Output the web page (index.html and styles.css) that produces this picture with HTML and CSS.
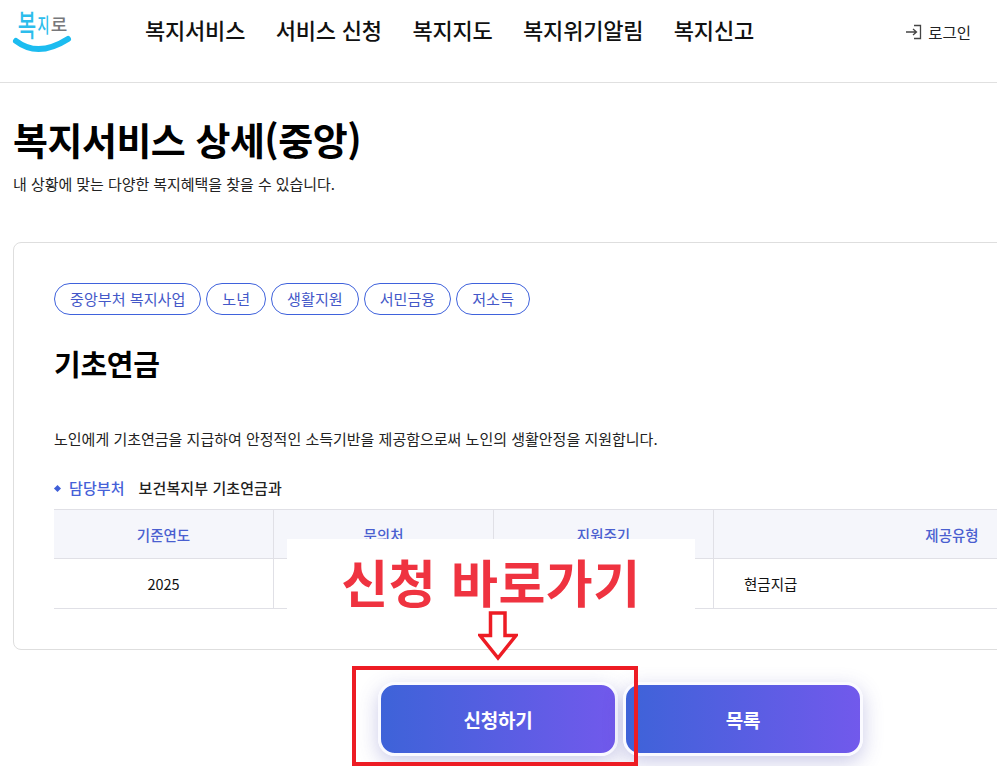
FILE: index.html
```html
<!DOCTYPE html>
<html lang="ko">
<head>
<meta charset="utf-8">
<title>복지서비스 상세(중앙)</title>
<link rel="stylesheet" href="styles.css">
</head>
<body>
<header class="header">
  <a class="logo" href="#">
    <svg width="64" height="56" viewBox="0 0 64 56">
      <text class="logo-a" transform="translate(19 36) scale(1 1.5)">복</text>
      <text class="logo-b" transform="translate(35.500 33) scale(1 1.6)">지</text>
      <text class="logo-c" transform="translate(51 31) scale(1 .95)">로</text>
      <path d="M8 41Q30 58 60 39" fill="none" stroke="#1cbcf0" stroke-width="6" stroke-linecap="round"/>
    </svg>
  </a>
  <nav class="nav">
    <a href="#">복지서비스</a>
    <a href="#">서비스 신청</a>
    <a href="#">복지지도</a>
    <a href="#">복지위기알림</a>
    <a href="#">복지신고</a>
  </nav>
  <a class="login" href="#">
    <svg width="16" height="16" viewBox="0 0 16 16"><path d="M0 8H10M7 5L10.500 8L7 11M8 1.500H14.500V14.500H8" fill="none" stroke="#444" stroke-width="1.300"/></svg>
    로그인
  </a>
</header>
<main class="main">
  <h1 class="title">복지서비스 상세(중앙)</h1>
  <p class="subtitle">내 상황에 맞는 다양한 복지혜택을 찾을 수 있습니다.</p>
  <section class="card">
    <div class="tags">
      <span class="tag">중앙부처 복지사업</span>
      <span class="tag">노년</span>
      <span class="tag">생활지원</span>
      <span class="tag">서민금융</span>
      <span class="tag">저소득</span>
    </div>
    <h2 class="service">기초연금</h2>
    <p class="desc">노인에게 기초연금을 지급하여 안정적인 소득기반을 제공함으로써 노인의 생활안정을 지원합니다.</p>
    <div class="dept"><span class="dot"></span><span class="dept-label">담당부처</span><span>보건복지부 기초연금과</span></div>
    <div class="table">
      <div class="th">기준연도</div><div class="th">문의처</div><div class="th">지원주기</div><div class="th">제공유형</div>
      <div class="td">2025</div><div class="td"></div><div class="td"></div><div class="td td-left">현금지급</div>
    </div>
  </section>
  <div class="actions">
    <button class="btn">신청하기</button>
    <button class="btn">목록</button>
  </div>
</main>
<div class="callout">신청 바로가기</div>
<svg class="arrow" width="40" height="50" viewBox="0 0 40 50"><path d="M12.500 2H27V24.500H38L20 47L2 24.500H12.500Z" fill="#fff" stroke="#ed1c24" stroke-width="3.500"/></svg>
<div class="highlight"></div>
</body>
</html>
```
FILE: styles.css
```css
* { box-sizing: border-box; }
html, body { margin: 0; height: 766px; overflow: hidden; background: #fff; }
body { font-family: "Noto Sans CJK KR", "Noto Sans", sans-serif; color: #111; position: relative; }
a { color: inherit; text-decoration: none; }

.header { height: 83px; border-bottom: 1px solid #e0e0e0; display: flex; align-items: flex-start; padding-left: 8px; }
.logo { width: 64px; height: 56px; display: block; }
.logo-a, .logo-b, .logo-c { font-family: "Noto Sans CJK KR", sans-serif; font-weight: 500; text-anchor: middle; }
.logo-a { font-size: 20px; fill: #2cbdec; }
.logo-b { font-size: 13px; fill: #2cbdec; }
.logo-c { font-size: 18px; fill: #77787b; }
.nav { display: flex; gap: 30.500px; margin-left: 73px; padding-top: 14px; font-size: 22px; font-weight: 500; line-height: 30px; letter-spacing: -0.2px; }
.login { margin-left: auto; margin-right: 26px; margin-top: 20px; display: flex; align-items: center; gap: 6px; font-size: 15.500px; line-height: 24px; color: #222; }

.main { padding: 0 0 0 13px; }
.title { margin: 30px 0 0; font-size: 38px; font-weight: 700; line-height: 52px; letter-spacing: -0.5px; color: #000; }
.subtitle { margin: 9px 0 0; font-size: 15px; line-height: 20px; letter-spacing: -0.05px; color: #222; }

.card { width: 1217px; height: 408px; margin-top: 48px; padding: 40px 40px 0; border: 1px solid #dedede; border-radius: 8px; }
.tags { display: flex; gap: 5px; }
.tag { height: 32px; padding: 0 15px; border: 1px solid #3f62dc; border-radius: 16px; font-size: 15.100px; line-height: 29px; color: #4458c8; white-space: nowrap; }
.service { margin: 28px 0 0; font-size: 29px; font-weight: 700; line-height: 40px; letter-spacing: -0.3px; color: #000; }
.desc { margin: 44px 0 0; font-size: 15px; line-height: 24px; color: #222; }
.dept { display: flex; align-items: center; margin-top: 25px; font-size: 15px; line-height: 24px; letter-spacing: 0.1px; color: #222; font-weight: 500; }
.dot { width: 5px; height: 5px; background: #3f5fd8; transform: rotate(45deg); margin-right: 10px; margin-left: 1px; }
.dept-label { color: #4560d8; font-weight: 500; margin-right: 14px; margin-left: -1px; }
.table { display: grid; grid-template-columns: 220px 220px 220px 476px; margin-top: 9px; border-top: 1px solid #e0e0e6; font-size: 14.500px; }
.th, .td { display: flex; align-items: center; justify-content: center; border-bottom: 1px solid #e0e0e6; border-right: 1px solid #e0e0e6; }
.th { height: 49px; background: #f5f6fb; color: #4a5fd0; font-weight: 500; }
.td { height: 50px; color: #111; }
.th:nth-child(4n), .td:nth-child(4n) { border-right: 0; }
.td-left { justify-content: flex-start; padding-left: 30px; }

.actions { display: flex; gap: 5px; margin: 32px 0 0 365px; }
.btn { width: 240px; height: 74px; border: 3px solid #fafaff; border-radius: 17px; background: linear-gradient(90deg, #3d63d8, #7259ec); background-origin: border-box; color: #fff; font-family: inherit; font-size: 19px; font-weight: 700; letter-spacing: -0.2px; box-shadow: 0 6px 20px rgba(80, 80, 180, 0.3); }

.callout { position: absolute; left: 287px; top: 539px; width: 408px; height: 70px; background: #fff; color: #ef3340; font-size: 51px; font-weight: 700; line-height: 84px; text-align: center; white-space: nowrap; letter-spacing: 0.5px; }
.arrow { position: absolute; left: 478px; top: 611px; }
.highlight { position: absolute; left: 352px; top: 666px; width: 286px; height: 100px; border: 4px solid #ed1c24; }
```
